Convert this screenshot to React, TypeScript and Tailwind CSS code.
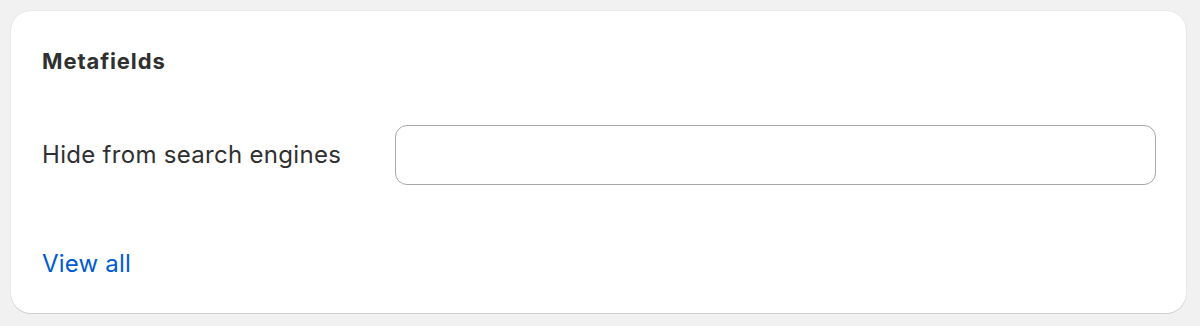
export default function App() {
    return (
        <div className="min-h-[326px] bg-[#f1f1f1] pl-[11px] pr-[14px] pt-[11px]" style={{ fontFamily: "Inter, 'Noto Sans', sans-serif" }}>
            <div className="h-[302px] rounded-[20px] bg-white pl-[31px] pr-[30px] pt-[34px] shadow-[0_1px_0_0_#d0d0d0,0_0_0_1px_#e8e8e8]">
                <h2 className="text-[22px] font-bold leading-[32px] tracking-[0.9px] text-[#303030]">Metafields</h2>

                <div className="mt-[48px] flex items-center">
                    <span className="w-[353px] text-[24px] leading-[32px] tracking-[0.3px] text-[#303030]">Hide from search engines</span>
                    <input
                        type="text"
                        className="h-[60px] flex-1 rounded-[12px] border border-[#a8a8a8] bg-white outline-none"
                    />
                </div>

                <a href="#" className="mt-[63px] block w-fit text-[24px] leading-[32px] tracking-[0.2px] text-[#005bd3]">View all</a>
            </div>
        </div>
    )
}
